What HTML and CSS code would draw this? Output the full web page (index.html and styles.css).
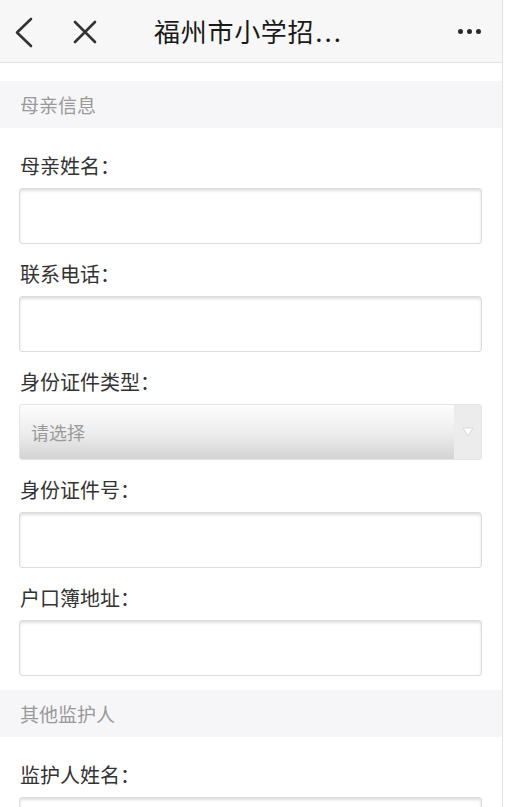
FILE: index.html
```html
<!DOCTYPE html>
<html lang="zh-CN">
<head>
<meta charset="utf-8">
<title>福州市小学招生</title>
<link rel="stylesheet" href="styles.css">
</head>
<body>
<div class="page">
  <header class="topbar">
    <div class="topbar-left">
      <svg class="icon icon-back" width="24" height="32" viewBox="0 0 24 32"><path d="M19 3 L5 16.5 L19 30" fill="none" stroke="#333" stroke-width="2.6" stroke-linecap="round" stroke-linejoin="round"/></svg>
      <svg class="icon icon-close" width="26" height="26" viewBox="0 0 26 26"><path d="M3 3 L23 23 M23 3 L3 23" fill="none" stroke="#333" stroke-width="2.6" stroke-linecap="round"/></svg>
    </div>
    <div class="topbar-title">福州市小学招<span class="ellipsis">...</span></div>
    <div class="topbar-right">
      <span class="dot"></span><span class="dot"></span><span class="dot"></span>
    </div>
  </header>

  <div class="section-title section-first">母亲信息</div>
  <div class="fields">
    <div class="field">
      <div class="label">母亲姓名：</div>
      <div class="input"></div>
    </div>
    <div class="field">
      <div class="label">联系电话：</div>
      <div class="input"></div>
    </div>
    <div class="field">
      <div class="label">身份证件类型：</div>
      <div class="select">
        <span class="select-text">请选择</span>
        <span class="select-arrow">
          <svg width="12" height="10" viewBox="0 0 12 10"><path d="M1 1 L11 1 L6 9 Z" fill="#fff" stroke="#d6d6d6" stroke-width="1" stroke-linejoin="round"/></svg>
        </span>
      </div>
    </div>
    <div class="field">
      <div class="label">身份证件号：</div>
      <div class="input"></div>
    </div>
    <div class="field">
      <div class="label">户口簿地址：</div>
      <div class="input"></div>
    </div>
  </div>

  <div class="section-title">其他监护人</div>
  <div class="fields">
    <div class="field">
      <div class="label">监护人姓名：</div>
      <div class="input"></div>
    </div>
  </div>
</div>
</body>
</html>
```

FILE: styles.css
```css
html, body {
  margin: 0;
  padding: 0;
  background: #ffffff;
}
body {
  font-family: "Noto Sans CJK SC", "Noto Sans", sans-serif;
  color: #333;
  overflow: hidden;
}
.page {
  width: 502px;
  min-height: 807px;
  border-right: 1px solid #e2e2e2;
  background: #fff;
}
.topbar {
  height: 62px;
  background: #f7f7f7;
  border-bottom: 1px solid #e3e3e3;
  display: grid;
  grid-template-columns: 130px 1fr 130px;
  align-items: center;
}
.topbar-left {
  display: flex;
  align-items: center;
  padding-left: 12px;
  gap: 36px;
}
.icon { display: block; }
.icon-back { margin-top: 2px; }
.icon-close { margin-top: 1px; }
.topbar-title {
  text-align: center;
  font-size: 26px;
  letter-spacing: 0.7px;
  line-height: 62px;
  color: #1a1a1a;
  white-space: nowrap;
  padding-right: 5px;
}
.ellipsis {
  letter-spacing: 2px;
  margin-left: 1px;
}
.topbar-right {
  display: flex;
  justify-content: flex-end;
  align-items: center;
  gap: 3.5px;
  padding-right: 21px;
  padding-top: 1px;
}
.dot {
  width: 5.5px;
  height: 5.5px;
  border-radius: 50%;
  background: #2a2a2a;
}
.section-title {
  height: 47px;
  line-height: 47px;
  background: #f6f6f8;
  color: #999;
  font-size: 19px;
  padding-left: 20px;
}
.section-first {
  margin-top: 18px;
}
.fields {
  padding: 8px 20px 14px 19px;
}
.field {
  margin-top: 17px;
}
.label {
  font-size: 20px;
  line-height: 26px;
  color: #333;
  padding-left: 1px;
  margin-bottom: 9px;
}
.input {
  height: 54px;
  border: 1px solid #dcdcdc;
  border-radius: 3px;
  background: #fff;
  box-shadow: inset 0 2px 3px rgba(0, 0, 0, 0.13);
}
.select {
  height: 54px;
  border: 1px solid #e4e4e4;
  border-radius: 3px;
  display: flex;
  align-items: stretch;
  overflow: hidden;
  background: linear-gradient(to bottom, #fdfdfd 0%, #ececec 55%, #d3d3d3 100%);
}
.select-text {
  flex: 1;
  display: flex;
  align-items: center;
  padding-left: 11px;
  font-size: 18px;
  color: #9a9a9a;
}
.select-arrow {
  width: 27px;
  background: #ececec;
  display: flex;
  align-items: center;
  justify-content: center;
}
```
